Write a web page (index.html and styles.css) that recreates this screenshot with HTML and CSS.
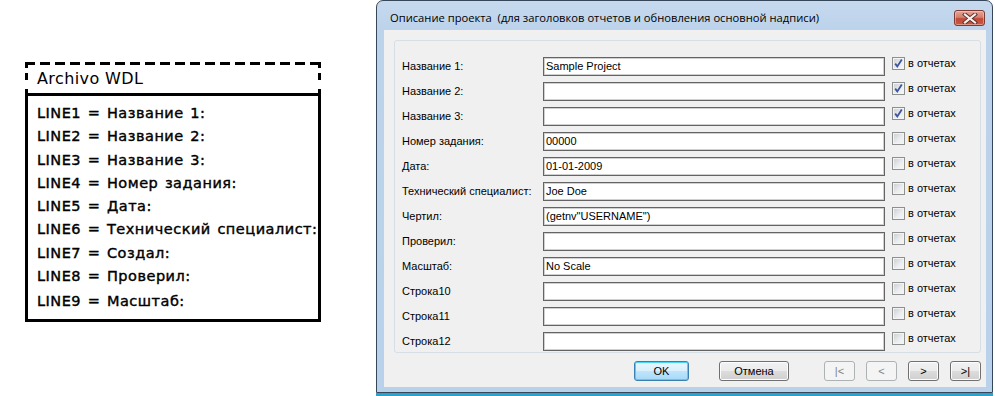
FILE: index.html
```html
<!DOCTYPE html>
<html lang="ru">
<head>
<meta charset="utf-8">
<title>Описание проекта</title>
<link rel="stylesheet" href="styles.css">
</head>
<body>
<div class="page">
  <div class="wdl">
    <div class="wdl-head">Archivo WDL</div>
    <div class="wdl-body">
      <div class="wdl-line">LINE1 = Название 1:</div>
      <div class="wdl-line">LINE2 = Название 2:</div>
      <div class="wdl-line">LINE3 = Название 3:</div>
      <div class="wdl-line">LINE4 = Номер задания:</div>
      <div class="wdl-line">LINE5 = Дата:</div>
      <div class="wdl-line">LINE6 = Технический специалист:</div>
      <div class="wdl-line">LINE7 = Создал:</div>
      <div class="wdl-line">LINE8 = Проверил:</div>
      <div class="wdl-line wdl-last">LINE9 = Масштаб:</div>
    </div>
  </div>

  <div class="dialog">
    <div class="titlebar">
      <span class="title">Описание проекта  (для заголовков отчетов и обновления основной надписи)</span>
      <span class="close">
        <svg width="16" height="11" viewBox="0 0 16 11">
          <path d="M3 1.5 L13 9.5 M13 1.5 L3 9.5" stroke="#5a2b26" stroke-width="4" stroke-linecap="square"/>
          <path d="M3 1.5 L13 9.5 M13 1.5 L3 9.5" stroke="#f4f0ef" stroke-width="2.2" stroke-linecap="square"/>
        </svg>
      </span>
    </div>
    <div class="client">
      <div class="group">
        <div class="row"><span class="lbl">Название 1:</span><span class="field">Sample Project</span><span class="chk"><span class="box on"><svg width="11" height="11" viewBox="0 0 11 11"><path d="M2.2 5.6 L4.3 8.4 L8.8 1.6" fill="none" stroke="#3d55a0" stroke-width="1.8"/></svg></span>в отчетах</span></div>
        <div class="row"><span class="lbl">Название 2:</span><span class="field"></span><span class="chk"><span class="box on"><svg width="11" height="11" viewBox="0 0 11 11"><path d="M2.2 5.6 L4.3 8.4 L8.8 1.6" fill="none" stroke="#3d55a0" stroke-width="1.8"/></svg></span>в отчетах</span></div>
        <div class="row"><span class="lbl">Название 3:</span><span class="field"></span><span class="chk"><span class="box on"><svg width="11" height="11" viewBox="0 0 11 11"><path d="M2.2 5.6 L4.3 8.4 L8.8 1.6" fill="none" stroke="#3d55a0" stroke-width="1.8"/></svg></span>в отчетах</span></div>
        <div class="row"><span class="lbl">Номер задания:</span><span class="field">00000</span><span class="chk"><span class="box"></span>в отчетах</span></div>
        <div class="row"><span class="lbl">Дата:</span><span class="field">01-01-2009</span><span class="chk"><span class="box"></span>в отчетах</span></div>
        <div class="row"><span class="lbl">Технический специалист:</span><span class="field">Joe Doe</span><span class="chk"><span class="box"></span>в отчетах</span></div>
        <div class="row"><span class="lbl">Чертил:</span><span class="field">(getnv"USERNAME")</span><span class="chk"><span class="box"></span>в отчетах</span></div>
        <div class="row"><span class="lbl">Проверил:</span><span class="field"></span><span class="chk"><span class="box"></span>в отчетах</span></div>
        <div class="row"><span class="lbl">Масштаб:</span><span class="field">No Scale</span><span class="chk"><span class="box"></span>в отчетах</span></div>
        <div class="row"><span class="lbl">Строка10</span><span class="field"></span><span class="chk"><span class="box"></span>в отчетах</span></div>
        <div class="row"><span class="lbl">Строка11</span><span class="field"></span><span class="chk"><span class="box"></span>в отчетах</span></div>
        <div class="row"><span class="lbl">Строка12</span><span class="field"></span><span class="chk"><span class="box"></span>в отчетах</span></div>
      </div>
      <div class="buttons">
        <span class="btn btn-default btn-ok">OK</span>
        <span class="btn btn-cancel">Отмена</span>
        <div class="nav">
          <span class="btn btn-nav disabled">|&lt;</span>
          <span class="btn btn-nav disabled">&lt;</span>
          <span class="btn btn-nav">&gt;</span>
          <span class="btn btn-nav">&gt;|</span>
        </div>
      </div>
    </div>
  </div>
</div>
</body>
</html>
```

FILE: styles.css
```css
html, body {
  margin: 0;
  padding: 0;
  background: #fff;
}

.page {
  display: flex;
  align-items: flex-start;
  width: 995px;
  height: 396px;
  overflow: hidden;
}

/* ---------- left WDL box ---------- */
.wdl {
  margin: 62px 0 0 25px;
  width: 296px;
  flex: none;
}

.wdl-head {
  height: 31px;
  box-sizing: border-box;
  padding: 8px 0 0 12px;
  font-family: "DejaVu Sans", sans-serif;
  font-size: 16px;
  letter-spacing: 0.4px;
  line-height: 18px;
  color: #000;
  background:
    repeating-linear-gradient(90deg, #000 0 10px, transparent 10px 15px) top left / 100% 3px no-repeat,
    linear-gradient(#000 0 6px, transparent 6px 11px, #000 11px 18px, transparent 18px 27px, #000 27px) top left / 3px 100% no-repeat,
    linear-gradient(#000 0 6px, transparent 6px 11px, #000 11px 18px, transparent 18px 27px, #000 27px) top right / 3px 100% no-repeat;
}

.wdl-body {
  border: 3px solid #000;
  height: 229px;
  box-sizing: border-box;
  padding: 6px 0 0 9px;
  font-family: "DejaVu Sans", sans-serif;
  font-size: 14.5px;
  letter-spacing: 0.5px;
  word-spacing: 1.5px;
  -webkit-text-stroke: 0.4px #000;
  line-height: 23.3px;
  color: #000;
  white-space: nowrap;
}

.wdl-last {
  margin-top: 1.5px;
}

/* ---------- dialog ---------- */
.dialog {
  margin-left: 55px;
  width: 617px;
  height: 393px;
  box-sizing: border-box;
  flex: none;
  border: 1px solid #37475a;
  border-radius: 7px 7px 0 0;
  background: linear-gradient(#c6d9ee, #bcd3eb 28px, #b9d1ea);
  padding: 0 6px 5px 7px;
  display: flex;
  flex-direction: column;
  box-shadow: 0 3px 0 #2aa3cb;
}

.titlebar {
  height: 29px;
  flex: none;
  display: flex;
  align-items: flex-start;
  justify-content: space-between;
  padding-left: 6px;
}

.title {
  margin-top: 9px;
  font-family: "Open Sans", sans-serif;
  font-size: 11.2px;
  line-height: 16px;
  color: #000;
  white-space: pre;
}

.close {
  margin: 9px 1px 0 0;
  width: 31px;
  height: 16px;
  box-sizing: border-box;
  border: 1px solid #7b3a33;
  border-radius: 3px;
  background: linear-gradient(#e6a597, #d2806f 45%, #c04a35 55%, #c85a45);
  box-shadow: inset 0 0 0 1px rgba(255, 220, 210, 0.45);
  display: flex;
  align-items: center;
  justify-content: center;
}

.client {
  flex: 1;
  background: #f0f0f0;
  padding: 10px 5px 0 10px;
  display: flex;
  flex-direction: column;
  font-family: "Liberation Sans", Arial, sans-serif;
  font-size: 11px;
  color: #000;
}

.group {
  height: 313px;
  box-sizing: border-box;
  border: 1px solid #d5dfe5;
  border-radius: 3px;
  padding: 16px 0 0 7px;
  display: flex;
  flex-direction: column;
  gap: 6px;
}

.row {
  display: flex;
  align-items: center;
  height: 19px;
}

.lbl {
  width: 141px;
  flex: none;
  margin-top: -2px;
  white-space: nowrap;
}

.field {
  width: 342px;
  height: 19px;
  flex: none;
  box-sizing: border-box;
  border: 1px solid #646464;
  box-shadow: inset 0 0 0 1px #d0d0d0;
  background: #fff;
  padding: 0 2px;
  line-height: 17px;
  white-space: nowrap;
}

.chk {
  align-self: flex-start;
  margin-left: 7px;
  display: flex;
  align-items: center;
  height: 13px;
  gap: 3px;
  line-height: 13px;
  white-space: nowrap;
}

.box {
  width: 13px;
  height: 13px;
  box-sizing: border-box;
  border: 1px solid #8e8f8f;
  box-shadow: inset 0 0 0 1px #f4f4f4;
  background: linear-gradient(135deg, #c9ccd1, #eceef0 60%, #f6f6f6);
  display: flex;
  align-items: center;
  justify-content: center;
}

/* ---------- buttons ---------- */
.buttons {
  margin-top: 8px;
  display: flex;
  align-items: center;
  padding-left: 240px;
}

.btn {
  height: 20px;
  flex: none;
  box-sizing: border-box;
  border: 1px solid #707070;
  border-radius: 3px;
  background: linear-gradient(#f2f2f2, #ebebeb 50%, #dddddd 50%, #cfcfcf);
  box-shadow: inset 0 0 0 1px #fcfcfc;
  display: flex;
  align-items: center;
  justify-content: center;
  line-height: 16px;
  color: #000;
}

.btn-ok {
  width: 55px;
}

.btn-default {
  border-color: #3c7fb1;
  background: linear-gradient(#eaf6fd, #d9f0fc 50%, #bee6fd 50%, #a7d9f5);
  box-shadow: inset 0 0 0 1px #48d3fb;
}

.btn-cancel {
  width: 70px;
  margin-left: 30px;
}

.nav {
  flex: none;
  margin-left: 35px;
  display: flex;
  gap: 11px;
}

.btn-nav {
  width: 31px;
}

.btn.disabled {
  border-color: #adb2b5;
  background: #f4f4f4;
  box-shadow: none;
  color: #838383;
}
```
